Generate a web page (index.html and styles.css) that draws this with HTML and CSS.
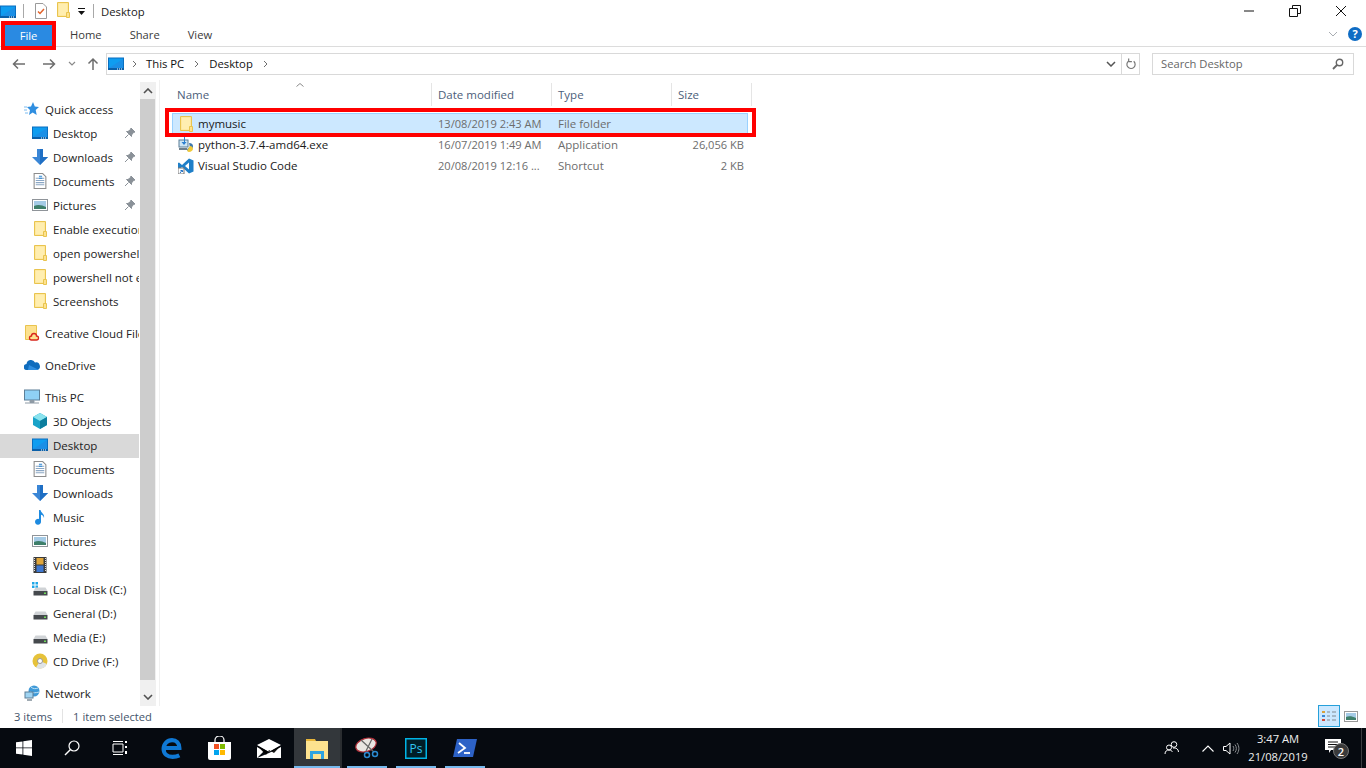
FILE: index.html
```html
<!DOCTYPE html>
<html lang="en">
<head>
<meta charset="utf-8">
<title>Desktop</title>
<link rel="stylesheet" href="styles.css">
</head>
<body>
<svg class="defs" width="0" height="0" aria-hidden="true">
  <defs>
    <symbol id="i-desktop" viewBox="0 0 16 14"><rect x="0.5" y="1" width="15" height="11.5" fill="#0f9df0" stroke="#0a6fc0"/><rect x="0" y="11" width="16" height="2" fill="#0a5fa8"/><path d="M1 11 L15 2 V11Z" fill="#1b8fe6"/><path d="M9 12h1M11 12h1M13 12h1" stroke="#fff" stroke-width="1"/></symbol>
    <symbol id="i-folder" viewBox="0 0 16 16"><path d="M2.500 0.500H13.500V14.500H2.500Z" fill="#fde28f" stroke="#e9c44e"/><path d="M3.500 1.500H12.500V11H11.500V13.500H3.500Z" fill="#ffeeb0"/><path d="M11.500 10.500H14.500V15.500H11.500Z" fill="#fde28f" stroke="#e9c44e"/></symbol>
    <symbol id="i-down" viewBox="0 0 16 16"><path d="M5 0H11V8H16L8 16 0 8H5Z" fill="#3a86d6"/><path d="M8 0H11V8H16L8 16Z" fill="#1f6fc4"/></symbol>
    <symbol id="i-doc" viewBox="0 0 12 15"><path d="M.5.5H8.5L11.5 3.5V14.5H.5Z" fill="#fff" stroke="#8c8c8c"/><path d="M2 5h8M2 7h8M2 9h8M2 11h8" stroke="#8aa6c4"/><path d="M5 3h3M5 5h3" stroke="#2a87d6"/></symbol>
    <symbol id="i-pic" viewBox="0 0 16 12"><rect x=".5" y=".5" width="15" height="11" fill="#fff" stroke="#8f9499"/><rect x="2" y="2" width="12" height="8" fill="#a5cbe6"/><path d="M2 7 C6 5 10 6 14 8 V10 H2Z" fill="#3e7f6a"/></symbol>
    <symbol id="i-pin" viewBox="0 0 12 12"><path d="M7 1 L11 5 L9.5 5.5 L7.5 8 L7.5 9.5 L2.5 4.5 L4 4.5 L6.5 2.5Z M4.5 7.5 L1 11" fill="#8a9198" stroke="#8a9198"/></symbol>
    <symbol id="i-drive" viewBox="0 0 15 9"><path d="M2.5.5H12.5L14.5 4H.5Z" fill="#d0d3d6"/><rect x="0.5" y="4" width="14" height="4.5" fill="#45494d"/><rect x="11" y="5.5" width="2" height="1.5" fill="#6fdc5a"/></symbol>
  </defs>
</svg>
<div class="window">
  <header class="titlebar">
    <svg class="ic-desk-title"><use href="#i-desktop"/></svg>
    <span class="qa-sep"></span>
    <svg class="ic-qa" viewBox="0 0 12 16"><path d="M.5.5H8L11.5 4V15.5H.5Z" fill="#fff" stroke="#9a9a9a"/><path d="M3 8.5l2 2 4-4.500" fill="none" stroke="#e2622a" stroke-width="1.500"/></svg>
    <svg class="ic-qa-folder"><use href="#i-folder"/></svg>
    <svg class="ic-drop" viewBox="0 0 7 8"><path d="M0 0H7V1H0ZM0 3H7L3.500 7Z" fill="#111"/></svg>
    <span class="qa-sep qa-sep2"></span>
    <span class="title">Desktop</span>
    <div class="winctl">
      <svg viewBox="0 0 12 12"><path d="M1 6H11" stroke="#111"/></svg>
      <svg viewBox="0 0 12 12"><path d="M.5 3.500H8.500V11.500H.5ZM3.500 3.500V.5H11.500V8.500H8.500" fill="none" stroke="#111"/></svg>
      <svg viewBox="0 0 12 12"><path d="M1 1L11 11M11 1L1 11" stroke="#111"/></svg>
    </div>
  </header>
  <nav class="ribbon">
    <span class="tab tab-file">File</span>
    <span class="tab tab-home">Home</span>
    <span class="tab tab-share">Share</span>
    <span class="tab tab-view">View</span>
    <svg class="rib-chev" viewBox="0 0 10 6"><path d="M1 1L5 5 9 1" fill="none" stroke="#a8adb2"/></svg>
    <svg class="rib-help" viewBox="0 0 14 14"><circle cx="7" cy="7" r="7" fill="#0f6cc4"/><text x="7" y="11" class="help-q">?</text></svg>
  </nav>
  <div class="addrrow">
    <svg class="navb nav-back" viewBox="0 0 14 12"><path d="M13 6H2M6 1.500L1.500 6 6 10.500" fill="none" stroke="#6d6d6d" stroke-width="1.500"/></svg>
    <svg class="navb nav-fwd" viewBox="0 0 14 12"><path d="M1 6H12M8 1.500L12.500 6 8 10.500" fill="none" stroke="#6d6d6d" stroke-width="1.500"/></svg>
    <svg class="nav-recent" viewBox="0 0 8 6"><path d="M1 1L4 4 7 1" fill="none" stroke="#8a8a8a" stroke-width="1.200"/></svg>
    <svg class="navb nav-up" viewBox="0 0 12 14"><path d="M6 13V2M1.500 6.500L6 2 10.500 6.500" fill="none" stroke="#6d6d6d" stroke-width="1.500"/></svg>
    <div class="addr">
      <svg class="addr-ic"><use href="#i-desktop"/></svg>
      <svg class="crumb-sep" viewBox="0 0 5 8"><path d="M1 1L4 4 1 7" fill="none" stroke="#6d6d6d"/></svg>
      <span class="crumb">This PC</span>
      <svg class="crumb-sep" viewBox="0 0 5 8"><path d="M1 1L4 4 1 7" fill="none" stroke="#6d6d6d"/></svg>
      <span class="crumb">Desktop</span>
      <svg class="crumb-sep" viewBox="0 0 5 8"><path d="M1 1L4 4 1 7" fill="none" stroke="#6d6d6d"/></svg>
      <svg class="addr-drop" viewBox="0 0 10 6"><path d="M1 1L5 5 9 1" fill="none" stroke="#555" stroke-width="1.500"/></svg>
      <span class="addr-refresh"><svg viewBox="0 0 12 13"><path d="M9.500 3.500A4.500 4.500 0 1 1 4 3.200M4 .5V4H7.500" fill="none" stroke="#777" stroke-width="1.300"/></svg></span>
    </div>
    <div class="search">
      <span>Search Desktop</span>
      <svg viewBox="0 0 12 12"><circle cx="7.500" cy="4.500" r="3.200" fill="none" stroke="#666" stroke-width="1.400"/><path d="M5 7L1 11" stroke="#666" stroke-width="1.800"/></svg>
    </div>
  </div>
  <div class="main">
    <aside class="navpane">
      <div class="tree">
        <div class="node top"><svg class="tic" viewBox="0 0 16 16"><path d="M9 1l1.800 4.500L15 6l-3.300 3 1 5-4-2.600L5 14l1-5L3 6l4-.5Z" fill="#2f8ee0"/><path d="M0 6h3M0 9h3M1 12h3" stroke="#7dbcf0"/></svg><span>Quick access</span></div>
        <div class="node sub"><svg class="tic ic-d"><use href="#i-desktop"/></svg><span>Desktop</span><svg class="pin"><use href="#i-pin"/></svg></div>
        <div class="node sub"><svg class="tic"><use href="#i-down"/></svg><span>Downloads</span><svg class="pin"><use href="#i-pin"/></svg></div>
        <div class="node sub"><svg class="tic"><use href="#i-doc"/></svg><span>Documents</span><svg class="pin"><use href="#i-pin"/></svg></div>
        <div class="node sub"><svg class="tic"><use href="#i-pic"/></svg><span>Pictures</span><svg class="pin"><use href="#i-pin"/></svg></div>
        <div class="node sub"><svg class="tic"><use href="#i-folder"/></svg><span>Enable execution policy</span></div>
        <div class="node sub"><svg class="tic"><use href="#i-folder"/></svg><span>open powershell here</span></div>
        <div class="node sub"><svg class="tic"><use href="#i-folder"/></svg><span>powershell not enabled</span></div>
        <div class="node sub"><svg class="tic"><use href="#i-folder"/></svg><span>Screenshots</span></div>
        <div class="node top gap"><svg class="tic" viewBox="0 0 16 16"><path d="M1.500.5H12.500V14.500H1.500Z" fill="#fde28f" stroke="#e9c44e"/><path d="M7.500 15a2 2 0 0 1 0-4 2.500 2.500 0 0 1 5 0 2 2 0 0 1 0 4Z" fill="#fde28f" stroke="#d8261c" stroke-width="1.300"/></svg><span>Creative Cloud Files</span></div>
        <div class="node top gap"><svg class="tic" viewBox="0 0 16 12"><path d="M3 11a3 3 0 0 1-.5-6A4.500 4.500 0 0 1 11 3.500 3.500 3.500 0 0 1 13 11Z" fill="#0f6cbd"/><path d="M5 6L15 11H4Z" fill="#2f8ee0"/></svg><span>OneDrive</span></div>
        <div class="node top gap"><svg class="tic" viewBox="0 0 16 15"><rect x=".5" y=".5" width="15" height="10" fill="#8fd0f5" stroke="#5c7f98"/><path d="M6 11h4v2H6ZM1 13.500H15" stroke="#8e9aa5" fill="#8e9aa5"/></svg><span>This PC</span></div>
        <div class="node sub"><svg class="tic" viewBox="0 0 16 16"><path d="M8 0L15 4V12L8 16 1 12V4Z" fill="#19a3c9"/><path d="M8 0L15 4 8 8 1 4Z" fill="#8be3ee"/><path d="M8 8L15 4V12L8 16Z" fill="#0c7e9e"/></svg><span>3D Objects</span></div>
        <div class="node sub selected"><svg class="tic ic-d"><use href="#i-desktop"/></svg><span>Desktop</span></div>
        <div class="node sub"><svg class="tic"><use href="#i-doc"/></svg><span>Documents</span></div>
        <div class="node sub"><svg class="tic"><use href="#i-down"/></svg><span>Downloads</span></div>
        <div class="node sub"><svg class="tic" viewBox="0 0 12 16"><path d="M5 1H6.500C7 4 11 5 10 9 9.500 6.500 8 6 7 5.800V12.500A3 3 0 1 1 5 10Z" fill="#1d8ae0"/></svg><span>Music</span></div>
        <div class="node sub"><svg class="tic"><use href="#i-pic"/></svg><span>Pictures</span></div>
        <div class="node sub"><svg class="tic" viewBox="0 0 13 16"><rect width="13" height="16" fill="#3b3b3b"/><rect x="3" y="1" width="7" height="6.500" fill="#e0a63a"/><rect x="3" y="8.500" width="7" height="6.500" fill="#3f78d0"/><path d="M1 1v14M12 1v14" stroke="#ddd" stroke-dasharray="1 1"/></svg><span>Videos</span></div>
        <div class="node sub"><svg class="tic" viewBox="0 0 16 16"><path d="M0 1h2.500v2.500H0ZM3.500 1H6v2.500H3.500ZM0 4.500h2.500V7H0ZM3.500 4.500H6V7H3.500Z" fill="#1fa7e8"/><g transform="translate(1 6)"><use href="#i-drive" width="15" height="9"/></g></svg><span>Local Disk (C:)</span></div>
        <div class="node sub"><svg class="tic" viewBox="0 0 16 16"><g transform="translate(1 6)"><use href="#i-drive" width="15" height="9"/></g></svg><span>General (D:)</span></div>
        <div class="node sub"><svg class="tic" viewBox="0 0 16 16"><g transform="translate(1 6)"><use href="#i-drive" width="15" height="9"/></g></svg><span>Media (E:)</span></div>
        <div class="node sub"><svg class="tic" viewBox="0 0 16 16"><circle cx="8" cy="8" r="7.500" fill="#e6c23a"/><path d="M8 8L15 11A7.500 7.500 0 0 1 4 14.500Z" fill="#dfe3e6"/><circle cx="8" cy="8" r="2.500" fill="#fff" stroke="#999"/></svg><span>CD Drive (F:)</span></div>
        <div class="node top gap"><svg class="tic" viewBox="0 0 16 16"><circle cx="10" cy="6" r="5.500" fill="#3f9ad8"/><path d="M7 2c2 2 5 2 7 1M6 7c3 1 6 1 9 0" stroke="#bfe2f5" fill="none"/><rect x="1" y="7" width="8" height="6" fill="#9fd4f2" stroke="#5c7f98"/><path d="M3 15H8" stroke="#7f8e99" stroke-width="1.500"/></svg><span>Network</span></div>
      </div>
      <div class="vscroll">
        <div class="vs-btn"><svg viewBox="0 0 10 6"><path d="M1 5L5 1 9 5" fill="none" stroke="#505050" stroke-width="1.600"/></svg></div>
        <div class="thumb"></div>
        <svg class="vs-down" viewBox="0 0 10 6"><path d="M1 1L5 5 9 1" fill="none" stroke="#505050" stroke-width="1.600"/></svg>
      </div>
    </aside>
    <section class="files">
      <div class="thead">
        <svg class="sort" viewBox="0 0 8 4"><path d="M.5 3.500L4 .5 7.500 3.500" fill="none" stroke="#8a8a8a"/></svg>
        <span class="col c-name">Name</span>
        <span class="col c-date">Date modified</span>
        <span class="col c-type">Type</span>
        <span class="col c-size">Size</span>
      </div>
      <div class="row row-sel">
        <span class="cell c-name nm"><svg class="fic"><use href="#i-folder"/></svg>mymusic</span>
        <span class="cell c-date">13/08/2019 2:43 AM</span>
        <span class="cell c-type">File folder</span>
        <span class="cell c-size"></span>
      </div>
      <div class="row">
        <span class="cell c-name nm"><svg class="fic" viewBox="0 0 16 16"><rect x="1" y="3" width="9" height="7" fill="#cfe6f5" stroke="#5a7d96"/><path d="M6 0V5H3.500L6 8 8.500 5H7V0Z" fill="#2b7fd0"/><path d="M1 11H9V13H1Z" fill="#6f7f8b"/><path d="M11 6c3 0 4 1.500 4 3.500S13 13 11 13 9 15 9 13s2-2 3-2.500" fill="#3f78ad"/><path d="M12 9c2 0 3 1.500 3 3s-2 3-4 3-2-1.500-1-3" fill="#f0c93a"/></svg>python-3.7.4-amd64.exe</span>
        <span class="cell c-date">16/07/2019 1:49 AM</span>
        <span class="cell c-type">Application</span>
        <span class="cell c-size">26,056 KB</span>
      </div>
      <div class="row">
        <span class="cell c-name nm"><svg class="fic" viewBox="0 0 16 16"><path d="M11 .5L15.500 2.500V13.500L11 15.500 4 9 1 11.500 0 11V5L1 4.500 4 7Z" fill="#1f7fc8"/><path d="M11 4.500L7 8l4 3.500Z" fill="#fff"/><rect y="10" width="6" height="6" fill="#fff" stroke="#777"/><path d="M2 15L4 12.500M2.500 12.500H4.500V14" fill="none" stroke="#1f6fc4"/></svg>Visual Studio Code</span>
        <span class="cell c-date">20/08/2019 12:16 ...</span>
        <span class="cell c-type">Shortcut</span>
        <span class="cell c-size">2 KB</span>
      </div>
    </section>
  </div>
  <footer class="status">
    <span class="st-items">3 items</span>
    <span class="st-sep"></span>
    <span>1 item selected</span>
    <span class="view-details"><svg viewBox="0 0 16 14"><path d="M1 2h3v2H1Z" fill="#d9a13a"/><path d="M1 6h3v2H1Z" fill="#3a86d6"/><path d="M1 10h3v2H1Z" fill="#d24a3a"/><path d="M6 3h3M11 3h4M6 7h3M11 7h4M6 11h3M11 11h4" stroke="#808890"/></svg></span>
    <span class="view-large"><svg viewBox="0 0 14 11"><rect x=".5" y=".5" width="13" height="10" fill="#fff" stroke="#9a9a9a"/><rect x="2" y="2" width="10" height="7" fill="#a5cbe6"/><path d="M2 6C5 4.500 8 5 12 7V9H2Z" fill="#3e7f6a"/></svg></span>
  </footer>
</div>
<div class="taskbar">
  <span class="tb tb-start"><svg viewBox="0 0 16 16"><path d="M0 2.300L6.500 1.400V7.500H0ZM7.300 1.300L16 0V7.500H7.300ZM0 8.300H6.500V14.600L0 13.700ZM7.300 8.300H16V16L7.300 14.700Z" fill="#fff"/></svg></span>
  <span class="tb tb-search"><svg viewBox="0 0 16 16"><circle cx="10" cy="6" r="5" fill="none" stroke="#fff" stroke-width="1.200"/><path d="M6.500 9.500L1 15" stroke="#fff" stroke-width="1.400"/></svg></span>
  <span class="tb tb-task"><svg viewBox="0 0 16 16"><path d="M1 4H11V12H1ZM1 1.500H11M1 14.500H11" fill="none" stroke="#fff"/><path d="M13 1h2v2h-2ZM13 6h2v2h-2ZM13 11h2v3h-2Z" fill="#fff"/></svg></span>
  <span class="tb tb-edge"><svg viewBox="0 0 20 20"><path d="M3.500 9.500H17.500C17.500 5 14.500 2 10.500 2 6 2 2.500 5.500 2.500 10.500 2.500 15.500 6.500 18 11 18 13.500 18 15.500 17.500 17.500 16.500" fill="none" stroke="#0f78d4" stroke-width="4"/></svg></span>
  <span class="tb tb-store"><svg viewBox="0 0 23 24"><path d="M7 6V4a4.500 4 0 0 1 9 0V6" fill="none" stroke="#fff" stroke-width="1.200"/><path d="M0 6H23V22a2 2 0 0 1-2 2H2a2 2 0 0 1-2-2Z" fill="#fff"/><path d="M6 8h5v5H6Z" fill="#f25022"/><path d="M12 8h5v5h-5Z" fill="#7fba00"/><path d="M6 14h5v5H6Z" fill="#00a4ef"/><path d="M12 14h5v5h-5Z" fill="#ffb900"/></svg></span>
  <span class="tb tb-mail"><svg viewBox="0 0 24 19"><path d="M0 6L12 0 24 6 12 13Z" fill="#fff"/><path d="M0 8L7 12 0 19ZM0 19L12 14 24 8V19Z" fill="#fff"/><path d="M0 6.500L12 13 24 6.500 17 14 12 11 9 16Z" fill="#000" opacity=".9"/></svg></span>
  <span class="tb tb-explorer"><svg viewBox="0 0 22 21"><path d="M0 1H9L10 3H21V7H0Z" fill="#e8b53a"/><rect y="3" width="22" height="18" fill="#fde28f"/><path d="M4 21V13H18V21H15V16H7V21Z" fill="#2ea3e0"/><rect x="7" y="16" width="8" height="5" fill="#fde28f"/></svg></span>
  <span class="tb-gap"></span>
  <span class="tb tb-snip"><svg viewBox="0 0 24 22"><ellipse cx="11" cy="8" rx="10.500" ry="6.500" fill="#e9e6e2" stroke="#b0303a" stroke-width="1.200" transform="rotate(-18 11 8)"/><path d="M6 3L19 15M17 2L11 14" stroke="#666" stroke-width="1.200"/><circle cx="12" cy="18" r="2.500" fill="none" stroke="#2a8ad0" stroke-width="1.500"/><circle cx="20" cy="17" r="2.500" fill="none" stroke="#2a8ad0" stroke-width="1.500"/></svg></span>
  <span class="tb tb-ps"><svg viewBox="0 0 22 21"><rect x=".75" y=".75" width="20.500" height="19.500" fill="#001d26" stroke="#00b4e6" stroke-width="1.500"/><text x="11" y="15" class="ps-t">Ps</text></svg></span>
  <span class="tb tb-pshell"><svg viewBox="0 0 24 18"><path d="M4 0H24L20 18H0Z" fill="#2d62c6"/><path d="M6 4L12 9 5 14" fill="none" stroke="#fff" stroke-width="1.800"/><path d="M11 14H17" stroke="#fff" stroke-width="1.800"/></svg></span>
  <div class="tray">
    <svg class="tr-people" viewBox="0 0 16 16"><circle cx="10" cy="4.500" r="2.800" fill="none" stroke="#fff"/><circle cx="5" cy="7.500" r="2.500" fill="none" stroke="#fff"/><path d="M1 14c0-3 2-4 4-4s3 1 3.500 2M9 8c3-.5 5.500 1 5.500 4" fill="none" stroke="#fff"/></svg>
    <svg class="tr-up" viewBox="0 0 12 7"><path d="M.5 6.500L6 1 11.500 6.500" fill="none" stroke="#fff" stroke-width="1.100"/></svg>
    <svg class="tr-vol" viewBox="0 0 17 13"><path d="M.5 4.500H3L7 1V12L3 8.500H.5Z" fill="none" stroke="#fff"/><path d="M10 4c1 1.500 1 3.500 0 5M12 2.500c1.800 2.500 1.800 5.500 0 8M14 1c2.500 3.500 2.500 7.500 0 11" fill="none" stroke="#8a8d90"/></svg>
    <div class="clock"><span>3:47 AM</span><span>21/08/2019</span></div>
    <span class="notif"><svg viewBox="0 0 16 14"><path d="M0 0H16V11H6L4 14V11H0Z" fill="#fff"/><path d="M3 3H13M3 5.500H13M3 8H10" stroke="#111"/></svg><span class="badge">2</span></span>
    <span class="show-desktop"></span>
  </div>
</div>
<div class="redbox red-file"></div>
<div class="redbox red-row"></div>
</body>
</html>
```

FILE: styles.css
```css
* { box-sizing: border-box; }
html, body { margin: 0; height: 100%; }
body {
  width: 1366px; height: 768px; overflow: hidden; background: #fff; position: relative;
  display: flex; flex-direction: column;
  font-family: "Open Sans", "Noto Sans", "Liberation Sans", sans-serif;
  font-size: 11.5px; color: #1a1a1a;
}
svg { display: block; flex: none; }
.defs { position: absolute; }
.window { flex: 1; display: flex; flex-direction: column; min-height: 0; }

.titlebar { height: 22px; display: flex; align-items: center; flex: none; }
.ic-desk-title { width: 16px; height: 14px; margin-top: 1px; }
.qa-sep { width: 1px; height: 14px; background: #a8a8a8; margin-left: 7px; }
.ic-qa { width: 12px; height: 16px; margin-left: 11px; }
.ic-qa-folder { width: 16px; height: 16px; margin-left: 8px; margin-top: -2px; }
.ic-drop { width: 7px; height: 8px; margin-left: 7px; margin-top: 2px; }
.qa-sep2 { margin-left: 8px; }
.title { margin-left: 7px; font-size: 11.3px; }
.winctl { margin-left: auto; display: flex; }
.winctl svg { width: 12px; height: 12px; margin-right: 34px; }
.winctl svg:last-child { margin-right: 19px; }

.ribbon { height: 25px; display: flex; align-items: center; border-bottom: 1px solid #dcdcdc; flex: none; position: relative; }
.tab { color: #3a3a3a; font-size: 11.2px; }
.tab-file { margin-left: 5px; width: 47px; height: 21px; margin-top: 2px; background: #2a8ae2; color: #fff; display: flex; align-items: center; justify-content: center; }
.tab-home { margin-left: 18px; }
.tab-share { margin-left: 28px; }
.tab-view { margin-left: 28px; }
.rib-chev { width: 10px; height: 6px; margin-left: auto; }
.rib-help { width: 14px; height: 14px; margin-left: 10px; margin-right: 4px; }
.help-q { font: bold 11px "Open Sans", sans-serif; fill: #fff; text-anchor: middle; }

.addrrow { height: 33px; display: flex; align-items: center; flex: none; }
.navb { width: 14px; height: 12px; }
.nav-back { margin-left: 12px; }
.nav-fwd { margin-left: 16px; }
.nav-recent { width: 8px; height: 6px; margin-left: 12px; }
.nav-up { width: 12px; height: 14px; margin-left: 11px; }
.addr { width: 1034px; height: 22px; margin-left: 7px; border: 1px solid #d9d9d9; display: flex; align-items: center; color: #111; font-size: 11.3px; }
.addr-ic { width: 16px; height: 14px; margin-left: 1px; }
.crumb-sep { width: 5px; height: 8px; margin-left: 8px; margin-right: 9px; }
.crumb + .crumb-sep { margin-left: 10px; margin-right: 10px; }
.addr-drop { width: 10px; height: 6px; margin-left: auto; margin-right: 5px; }
.addr-refresh { width: 18px; height: 20px; border-left: 1px solid #d9d9d9; display: flex; align-items: center; justify-content: center; }
.addr-refresh svg { width: 11px; height: 12px; }
.search { width: 202px; height: 22px; margin-left: 12px; border: 1px solid #d9d9d9; display: flex; align-items: center; justify-content: space-between; padding: 0 9px 0 8px; color: #666; font-size: 11.2px; }
.search svg { width: 12px; height: 12px; }

.main { flex: 1; display: flex; min-height: 0; }
.navpane { width: 156px; display: flex; flex: none; position: relative; }
.tree { width: 140px; padding-top: 18px; overflow: hidden; flex: none; }
.node { height: 24px; padding-bottom: 2px; display: flex; align-items: center; white-space: nowrap; color: #222; position: relative; overflow: hidden; width: 139px; }
.node.top { padding-left: 24px; }
.node.sub { padding-left: 32px; }
.node.gap { margin-top: 8px; }
.node .tic { width: 16px; height: 16px; margin-right: 5px; flex: none; }
.ic-d { height: 14px !important; }
.node.selected { background: #d9d9d9; }
.pin { width: 12px; height: 12px; position: absolute; left: 124px; top: 5px; }
.vscroll { width: 16px; margin-top: 2px; background: #f0f0f0; position: relative; height: 624px; }
.vs-btn { height: 17px; display: flex; align-items: center; justify-content: center; }
.vs-btn svg { width: 10px; height: 6px; }
.thumb { height: 581px; width: 15px; background: #cdcdcd; }
.vs-down { width: 10px; height: 6px; position: absolute; left: 3px; bottom: 6px; }

.files { flex: 1; margin-left: 3px; border-left: 1px solid #f0f0f0; padding: 3px 0 0 5px; position: relative; }
.thead { height: 23px; margin-bottom: 7px; display: flex; align-items: center; position: relative; color: #4c607a; }
.sort { width: 8px; height: 4px; position: absolute; left: 131px; top: 0; }
.col { height: 23px; display: flex; align-items: center; padding-left: 6px; border-right: 1px solid #e5e5e5; }
.col.c-name { padding-left: 12px; width: 267px; }
.col.c-date { width: 120px; }
.col.c-type { width: 120px; }
.col.c-size { width: 80px; }
.row { height: 21px; display: flex; align-items: center; width: 576px; margin-left: 7px; white-space: nowrap; }
.row-sel { background: #cce8ff; box-shadow: inset 0 0 0 1px #99d1ff; }
.cell { color: #6d6d6d; display: flex; align-items: center; }
.cell.nm { color: #1a1a1a; width: 261px; padding-left: 6px; }
.cell.c-date { padding-left: 5px; width: 120px; font-size: 11.1px; }
.cell.c-type { padding-left: 5px; width: 120px; }
.cell.c-size { width: 75px; justify-content: flex-end; padding-right: 4px; font-size: 11.1px; }
.fic { width: 16px; height: 16px; margin-right: 4px; }

.status { height: 22px; padding: 0 0 2px 14px; display: flex; align-items: center; flex: none; color: #44546a; font-size: 11.2px; }
.st-sep { width: 1px; height: 14px; background: #e3e3e3; margin: 0 10px; }
.view-details { margin-left: auto; width: 22px; height: 22px; flex: none; background: #cce8ff; border: 1px solid #26a0da; display: flex; align-items: center; justify-content: center; }
.view-details svg { width: 16px; height: 14px; }
.view-large { width: 22px; height: 22px; flex: none; display: flex; align-items: center; justify-content: center; margin-right: 4px; }
.view-large svg { width: 14px; height: 11px; }

.taskbar { height: 40px; flex: none; background: #060a10; display: flex; align-items: center; color: #fff; }
.tb { height: 40px; display: flex; align-items: center; justify-content: center; position: relative; flex: none; }
.tb-start { width: 48px; }
.tb-start svg { width: 16px; height: 16px; }
.tb-search { width: 48px; }
.tb-search svg { width: 16px; height: 16px; }
.tb-task { width: 48px; }
.tb-task svg { width: 16px; height: 16px; }
.tb-edge { width: 55px; }
.tb-edge svg { width: 21px; height: 21px; }
.tb-store { width: 40px; }
.tb-store svg { width: 23px; height: 24px; }
.tb-mail { width: 55px; padding-left: 4px; }
.tb-mail svg { width: 24px; height: 19px; }
.tb-explorer { width: 46px; background: #33373b; }
.tb-explorer svg { width: 22px; height: 21px; }
.tb-explorer::after, .tb-snip::after, .tb-ps::after, .tb-pshell::after { content: ""; position: absolute; left: 0; right: 0; bottom: 0; height: 2px; background: #76b9ed; }
.tb-gap { width: 2px; height: 40px; background: #2a2d30; flex: none; }
.tb-snip { width: 40px; margin-left: 5px; margin-right: 9px; }
.tb-snip svg { width: 24px; height: 22px; }
.tb-ps { width: 40px; margin-right: 9px; }
.tb-ps svg { width: 22px; height: 21px; }
.tb-pshell { width: 40px; }
.tb-pshell svg { width: 24px; height: 18px; }
.ps-t { font: 12px "Open Sans", sans-serif; fill: #31c5f0; text-anchor: middle; }
.tray { margin-left: auto; display: flex; align-items: center; height: 40px; }
.tr-people { width: 16px; height: 16px; }
.tr-up { width: 12px; height: 7px; margin-left: 22px; }
.tr-vol { width: 17px; height: 13px; margin-left: 9px; }
.clock { display: flex; flex-direction: column; align-items: center; margin-left: 5px; width: 66px; font-size: 11.2px; line-height: 18px; color: #eee; }
.notif { position: relative; width: 24px; height: 24px; margin-left: 14px; margin-right: 12px; }
.notif svg { width: 16px; height: 14px; position: absolute; left: 0; top: 3px; }
.badge { position: absolute; left: 8px; top: 7px; width: 16px; height: 16px; border-radius: 50%; background: #3a3a3a; border: 1px solid #777; color: #fff; font-size: 11px; font-weight: 600; display: flex; align-items: center; justify-content: center; }
.show-desktop { width: 1px; height: 40px; background: #3a3d40; margin-right: 4px; }

.redbox { position: absolute; border: 4px solid #ff0000; pointer-events: none; }
.red-file { left: 1px; top: 21px; width: 55px; height: 29px; }
.red-row { left: 165px; top: 108px; width: 591px; height: 29px; }
```
